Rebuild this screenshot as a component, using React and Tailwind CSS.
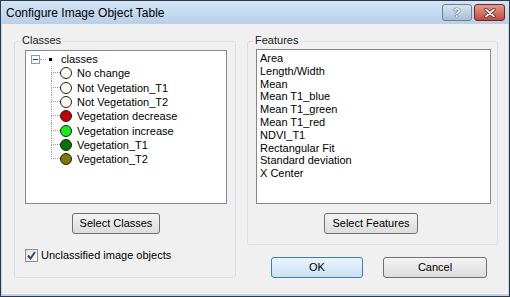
import React from "react";

const font = { fontFamily: '"Liberation Sans", Arial, sans-serif' };

const classes = [
  { name: "No change", color: "bg-[#fffbec]" },
  { name: "Not Vegetation_T1", color: "bg-[#fffbec]" },
  { name: "Not Vegetation_T2", color: "bg-[#fffbec]" },
  { name: "Vegetation decrease", color: "bg-[#c40000]" },
  { name: "Vegetation increase", color: "bg-[#14f014]" },
  { name: "Vegetation_T1", color: "bg-[#007400]" },
  { name: "Vegetation_T2", color: "bg-[#7c7800]" },
];

const features = [
  "Area",
  "Length/Width",
  "Mean",
  "Mean T1_blue",
  "Mean T1_green",
  "Mean T1_red",
  "NDVI_T1",
  "Rectangular Fit",
  "Standard deviation",
  "X Center",
];

function Button({ children, className = "", primary }) {
  return (
    <div
      className={
        "flex items-center justify-center h-[21px] rounded-[3px] border text-[11px] text-black " +
        (primary
          ? "border-[#3c7fb1] bg-gradient-to-b from-[#eaf5fd] to-[#c8e1f4] "
          : "border-[#707070] bg-gradient-to-b from-[#f4f4f4] to-[#dcdcdc] ") +
        className
      }
    >
      {children}
    </div>
  );
}

function TreeRow({ item, last }) {
  return (
    <div className="flex h-[14.3px] items-center">
      <div className="flex flex-col w-[9px] h-full">
        <div className="h-1/2 border-l border-b border-dotted border-[#a0a0a0]" />
        <div className={"h-1/2 " + (last ? "" : "border-l border-dotted border-[#a0a0a0]")} />
      </div>
      <div className={"w-[12px] h-[12px] rounded-full border border-[#202020] " + item.color} />
      <span className="ml-[5px] whitespace-nowrap">{item.name}</span>
    </div>
  );
}

export default function App() {
  return (
    <div
      className="w-[510px] h-[297px] flex flex-col border border-[#2f3a48] bg-[#bcd3eb] overflow-hidden"
      style={font}
    >
      {/* title bar */}
      <div className="h-[23px] flex items-center bg-gradient-to-b from-[#d3e4f5] to-[#b9d0ea] shrink-0">
        <span className="ml-[5px] text-[12px] text-black">Configure Image Object Table</span>
        <div className="ml-auto flex gap-[2px] mr-[4px] self-start mt-[3px]">
          <div className="w-[30px] h-[17px] rounded-[3px] border border-[#6d7f95] bg-gradient-to-b from-[#d8e5f2] to-[#a9bed6] flex items-center justify-center">
            <span className="text-[12px] font-bold text-white [text-shadow:0_0_1px_#23364d,0_0_1px_#23364d]">?</span>
          </div>
          <div className="w-[31px] h-[17px] rounded-[3px] border border-[#6b2a25] bg-gradient-to-b from-[#e39a8f] to-[#c44a3c] flex items-center justify-center">
            <svg width="12" height="10" viewBox="0 0 12 10">
              <path d="M2 1.5 L10 8.5 M10 1.5 L2 8.5" stroke="#3b1512" strokeWidth="3.2" strokeLinecap="round" />
              <path d="M2 1.5 L10 8.5 M10 1.5 L2 8.5" stroke="#ffffff" strokeWidth="1.8" strokeLinecap="round" />
            </svg>
          </div>
        </div>
      </div>

      {/* client */}
      <div className="flex-1 bg-[#f0f0f0] mx-[1px] mb-[2px] border-b border-r border-[#f6f6f6] flex text-[11px] text-black pt-[17px]">
        {/* Classes group */}
        <div className="ml-[12px] w-[222px] h-[237px] border border-[#d5dfe5] rounded-[3px] flex flex-col">
          <span className="-mt-[8px] ml-[5px] px-[2px] w-fit bg-[#f0f0f0] leading-[13px] text-[#222]">Classes</span>
          <div className="ml-[10px] mt-[3px] w-[202px] h-[154px] border border-[#828790] bg-white pt-[1px] pl-[5px] leading-[14px]">
            <div className="flex h-[14.3px] items-center">
              <div className="w-[9px] h-[9px] border border-[#7f9db9] bg-white flex items-center justify-center">
                <div className="w-[5px] h-[1px] bg-[#1c3d80]" />
              </div>
              <div className="w-[6px] border-t border-dotted border-[#a0a0a0]" />
              <div className="ml-[3px] w-[3px] h-[3px] bg-black" />
              <span className="ml-[9px]">classes</span>
            </div>
            <div className="ml-[20px]">
              {classes.map((c, i) => (
                <TreeRow key={c.name} item={c} last={i === classes.length - 1} />
              ))}
            </div>
          </div>
          <Button className="ml-[57px] mt-[9px] w-[88px]">Select Classes</Button>
          <div className="flex items-center ml-[10px] mt-[13px]">
            <div className="w-[13px] h-[13px] border border-[#8e8f8f] bg-gradient-to-br from-[#e4e4e4] to-[#fbfbfb] flex items-center justify-center">
              <svg width="9" height="9" viewBox="0 0 9 9">
                <path d="M1 4.5 L3.5 7.5 L8 1" fill="none" stroke="#2d4a8f" strokeWidth="2" />
              </svg>
            </div>
            <span className="ml-[3px]">Unclassified image objects</span>
          </div>
        </div>

        {/* right side */}
        <div className="ml-[11px] w-[251px] flex flex-col">
          <div className="w-[251px] h-[204px] border border-[#d5dfe5] rounded-[3px] flex flex-col">
            <span className="-mt-[8px] ml-[5px] px-[2px] w-fit bg-[#f0f0f0] leading-[13px] text-[#222]">Features</span>
            <div className="ml-[8px] mt-[2px] w-[235px] h-[155px] border border-[#828790] bg-white pt-[2px] pl-[3px] leading-[12.8px]">
              {features.map((f) => (
                <div key={f}>{f}</div>
              ))}
            </div>
            <Button className="ml-[76px] mt-[9px] w-[94px]">Select Features</Button>
          </div>
          <div className="flex mt-[12px] ml-[24px]">
            <Button primary className="w-[92px]">OK</Button>
            <Button className="ml-[20px] w-[104px]">Cancel</Button>
          </div>
        </div>
      </div>
    </div>
  );
}
